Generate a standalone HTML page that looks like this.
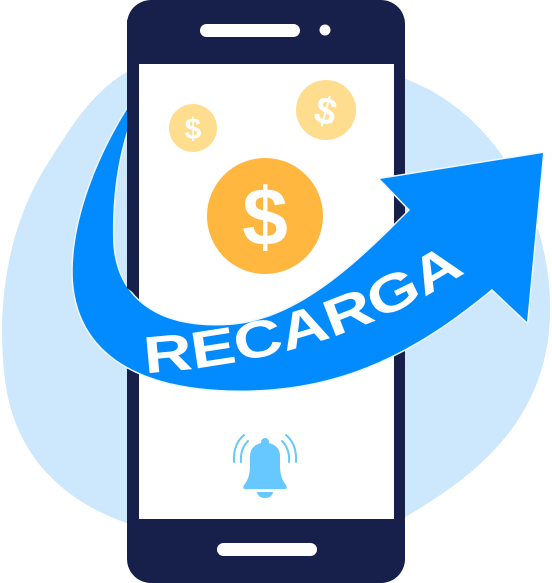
<!DOCTYPE html>
<html><head><style>html,body{margin:0;padding:0;background:#fff;width:552px;height:583px;overflow:hidden}</style></head>
<body>
<svg width="552" height="583" viewBox="0 0 552 583" xmlns="http://www.w3.org/2000/svg">
<path d="M130,70 C220,30 330,40 430,90 C520,140 560,250 548,340 C535,430 470,480 400,520 C330,555 230,545 150,530 C70,510 15,460 5,380 C-5,300 10,220 50,160 C75,120 95,90 130,70 Z" fill="#cde7fc"/>
<rect x="127" y="0" width="278" height="583" rx="24" fill="#16204a"/>
<rect x="139" y="64" width="255" height="455" fill="#fff"/>
<rect x="200" y="24" width="100" height="13" rx="6.5" fill="#fff"/>
<circle cx="325" cy="30" r="5.5" fill="#fff"/>
<rect x="217" y="543" width="100" height="13" rx="6.5" fill="#fff"/>
<circle cx="193" cy="128" r="24" fill="#fedd8e"/>
<text x="193" y="139" font-family="Liberation Sans, sans-serif" font-weight="bold" font-size="30" fill="#fff" text-anchor="middle">$</text>
<circle cx="326" cy="110" r="30" fill="#fedd8e"/>
<text x="326" y="124" font-family="Liberation Sans, sans-serif" font-weight="bold" font-size="38" fill="#fff" text-anchor="middle" transform="rotate(15 326 110)">$</text>
<circle cx="265" cy="216" r="58" fill="#ffb73f"/>
<text x="265" y="245" font-family="Liberation Sans, sans-serif" font-weight="bold" font-size="82" fill="#fff" text-anchor="middle">$</text>
<path d="M133,100 C100,150 70,220 73,280 C78,360 150,395 260,390 C360,385 430,340 492,289 L527,322 L543,153 L380,179 L410,210 C360,260 300,320 230,325 C160,330 115,300 113,240 C112,180 122,140 138,100 Z" fill="#028bff" stroke="#eef7ff" stroke-width="3" stroke-linejoin="round"/>
<path d="M133,100 C100,150 70,220 73,280 C78,360 150,395 260,390 C360,385 430,340 492,289 L527,322 L543,153 L380,179 L410,210 C360,260 300,320 230,325 C160,330 115,300 113,240 C112,180 122,140 138,100 Z" fill="#028bff"/>
<path d="M127,20 L139,20 L139,297 L127,288 Z" fill="#16204a"/>
<defs><path id="tp" d="M145,373 Q330,362 472,268"/></defs>
<text font-family="Liberation Sans, sans-serif" font-weight="bold" font-size="52" fill="#fff"><textPath href="#tp" textLength="340" lengthAdjust="spacingAndGlyphs">RECARGA</textPath></text>
<g fill="#66c8ff">
<path d="M244,485 Q250,478 250,466 L250,456 Q250,446 261,443 Q261,438 265,438 Q269,438 269,443 Q280,446 280,456 L280,466 Q280,478 286,485 Q288,489 285,489 L245,489 Q242,489 244,485 Z"/>
<path d="M257,492 L273,492 Q272,498 265,498 Q258,498 257,492 Z"/>
</g>
<g fill="none" stroke="#66c8ff" stroke-width="2" stroke-linecap="round">
<path d="M241,462 Q240,449 248,441"/><path d="M234,462 Q233,444 244,435"/>
<path d="M289,462 Q290,449 282,441"/><path d="M296,462 Q297,444 286,435"/>
</g>
</svg>
</body></html>
